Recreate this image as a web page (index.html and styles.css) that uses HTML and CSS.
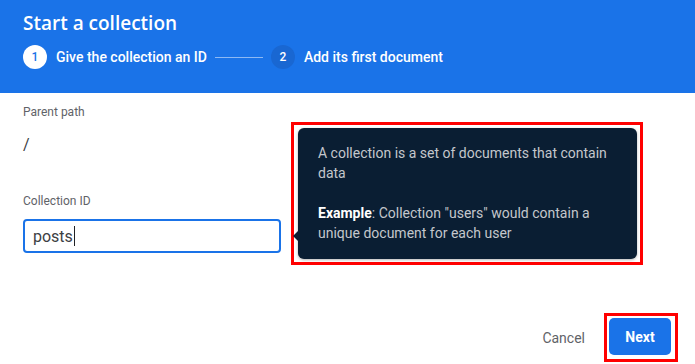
FILE: index.html
```html
<!DOCTYPE html>
<html lang="en">
<head>
  <meta charset="UTF-8" />
  <title>Start a collection</title>
  <link rel="stylesheet" href="styles.css">
</head>
<body>
  <div class="dialog">
    <header>
      <div class="title">Start a collection</div>
      <div class="steps">
        <div class="step active"><span class="num">1</span>Give the collection an ID</div>
        <div class="step-line"></div>
        <div class="step"><span class="num">2</span>Add its first document</div>
      </div>
    </header>
    <main>
      <div class="fields">
        <div class="label">Parent path</div>
        <div class="path">/</div>
        <div class="label id-label">Collection ID</div>
        <div class="input">posts<span class="caret"></span></div>
      </div>
      <div class="mark tip-mark">
        <div class="tooltip">
          <p>A collection is a set of documents that contain data</p>
          <p><b>Example</b>: Collection "users" would contain a unique document for each user</p>
        </div>
      </div>
    </main>
    <footer>
      <button class="cancel-btn">Cancel</button>
      <div class="mark next-mark">
        <button class="next-btn">Next</button>
      </div>
    </footer>
  </div>
</body>
</html>
```

FILE: styles.css
```css
body {
  margin: 0;
  background: #fff;
  font-family: Roboto, 'Liberation Sans', Arial, sans-serif;
}
.dialog {
  width: 695px;
  height: 364px;
  display: flex;
  flex-direction: column;
  overflow: hidden;
}
header {
  background: #1a73e8;
  height: 93px;
  box-sizing: border-box;
  padding: 10px 23px 0 23px;
  color: #fff;
}
.title {
  font-family: 'Open Sans', Roboto, sans-serif;
  font-size: 19px;
  font-weight: 600;
  line-height: 26px;
}
.steps {
  display: flex;
  align-items: center;
  margin-top: 9px;
  font-size: 14px;
  font-weight: 500;
}
.step {
  display: flex;
  align-items: center;
  gap: 9px;
}
.num {
  width: 24px;
  height: 24px;
  border-radius: 50%;
  background: #1967d2;
  color: #fff;
  font-size: 12px;
  display: flex;
  align-items: center;
  justify-content: center;
}
.step.active .num {
  background: #fff;
  color: #1a73e8;
}
.step-line {
  width: 48px;
  height: 1px;
  background: rgba(255,255,255,0.5);
  margin: 0 8px;
}
main {
  display: flex;
  gap: 10px;
  padding: 0 23px;
  height: 218px;
}
.fields {
  width: 258px;
}
.label {
  font-size: 12px;
  line-height: 16px;
  color: #5f6368;
  margin-top: 11px;
}
.path {
  font-size: 16px;
  line-height: 24px;
  color: #3c4043;
  margin-top: 13px;
}
.id-label {
  margin-top: 36px;
}
.input {
  margin-top: 10px;
  height: 34px;
  box-sizing: border-box;
  border: 2px solid #1a73e8;
  border-radius: 4px;
  padding: 0 8px;
  font-size: 16px;
  color: #3c4043;
  display: flex;
  align-items: center;
}
.caret {
  width: 1px;
  height: 20px;
  background: #202124;
  margin-left: 1px;
}
.mark {
  border: 3px solid #ff0000;
  box-sizing: border-box;
}
.tip-mark {
  margin-top: 29px;
  width: 352px;
  height: 143px;
  padding: 3px 3px 3px 4px;
  position: relative;
}
.tooltip {
  background: #0a1e33;
  border-radius: 6px;
  height: 100%;
  box-sizing: border-box;
  padding: 15px 20px;
  color: #c4c7cc;
  font-size: 14px;
  line-height: 20px;
  box-shadow: 0 1px 3px rgba(0,0,0,0.3);
  position: relative;
}
.tooltip::before {
  content: "";
  position: absolute;
  left: -5px;
  top: 103px;
  border-top: 5px solid transparent;
  border-bottom: 5px solid transparent;
  border-right: 5px solid #0a1e33;
}
.tooltip p {
  margin: 0 0 20px 0;
}
.tooltip p:last-child {
  margin-bottom: 0;
}
.tooltip b {
  color: #fff;
  font-weight: 700;
}
footer {
  display: flex;
  justify-content: flex-end;
  align-items: center;
  padding: 0 17px 0 0;
  gap: 19px;
  height: 53px;
}
button {
  font-family: Roboto, 'Liberation Sans', Arial, sans-serif;
  font-size: 14px;
  font-weight: 500;
  border: none;
  cursor: pointer;
}
.cancel-btn {
  background: none;
  color: #5f6368;
  font-weight: 400;
  padding: 0;
}
.next-mark {
  padding: 2px;
  width: 74px;
  height: 49px;
  align-self: flex-start;
  margin-top: 2px;
}
.next-btn {
  width: 62px;
  height: 37px;
  background: #1a73e8;
  color: #fff;
  font-weight: 700;
  border-radius: 5px;
}
```
